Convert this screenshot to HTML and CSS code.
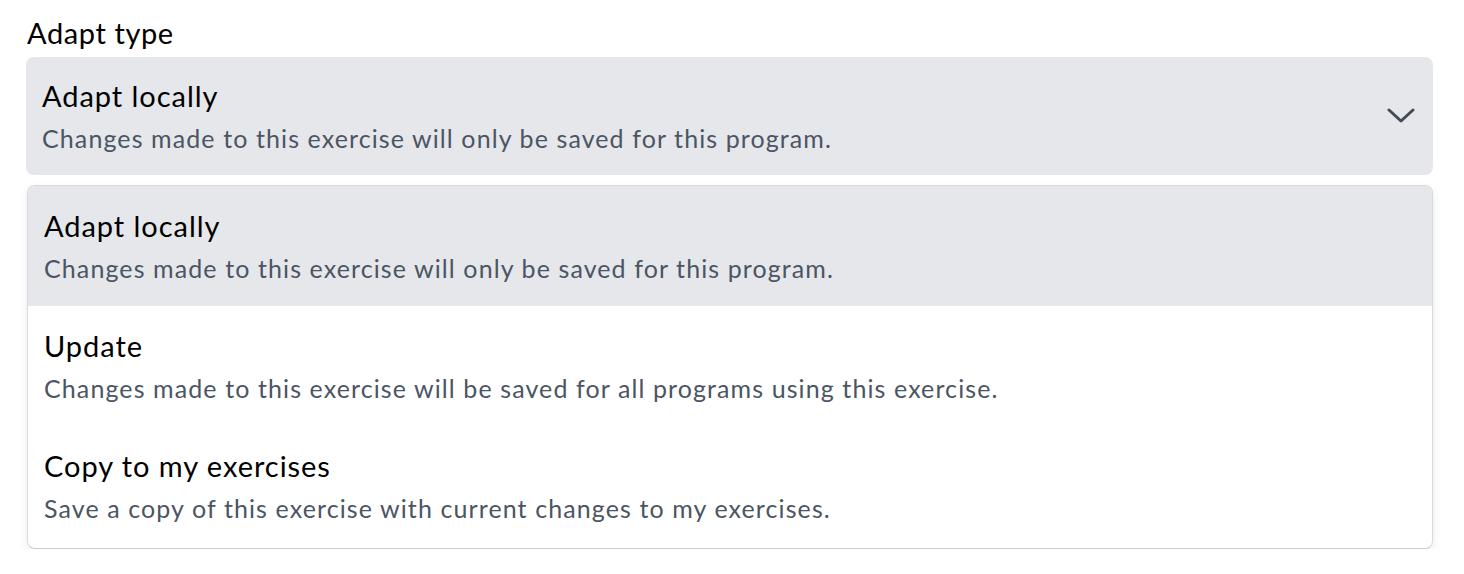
FILE: index.html
```html
<!DOCTYPE html>
<html>
<head>
<meta charset="utf-8">
<link rel="stylesheet" href="styles.css">
</head>
<body>
<div class="field">
  <div class="label">Adapt type</div>
  <div class="select">
    <div class="opt-text">
      <div class="title">Adapt locally</div>
      <div class="desc">Changes made to this exercise will only be saved for this program.</div>
    </div>
    <svg class="chev" width="28" height="16" viewBox="0 0 28 16"><path d="M2 2 L14 13 L26 2" fill="none" stroke="#424b5a" stroke-width="3" stroke-linecap="round" stroke-linejoin="round"/></svg>
  </div>
  <div class="menu">
    <div class="item active">
      <div class="title">Adapt locally</div>
      <div class="desc">Changes made to this exercise will only be saved for this program.</div>
    </div>
    <div class="item">
      <div class="title">Update</div>
      <div class="desc">Changes made to this exercise will be saved for all programs using this exercise.</div>
    </div>
    <div class="item">
      <div class="title">Copy to my exercises</div>
      <div class="desc">Save a copy of this exercise with current changes to my exercises.</div>
    </div>
  </div>
</div>
</body>
</html>
```
FILE: styles.css
```css
html, body { margin: 0; padding: 0; background: #fff; }
body { font-family: "Lato", "Noto Sans", sans-serif; color: #000; }
.field { padding: 14px 31px 0 26px; }
.label { font-size: 29px; line-height: 38px; padding-left: 1px; letter-spacing: 0.6px; }
.select {
  margin-top: 5px;
  height: 118px;
  background: #e5e7eb;
  border-radius: 8px;
  display: flex;
  align-items: center;
  padding: 0 16px 0 16px;
  box-sizing: border-box;
}
.opt-text { flex: 1; }
.chev { margin-right: 2px; }
.title { font-size: 29px; line-height: 38px; color: #000; letter-spacing: 0.95px; }
.desc { font-size: 25px; line-height: 34px; color: #4b5563; margin-top: 6px; letter-spacing: 1.1px; }
.menu {
  margin-top: 10px;
  margin-left: 1px;
  border: 1px solid #d7d9de;
  border-bottom-color: #c9ccd2;
  border-radius: 8px;
  overflow: hidden;
  box-shadow: 0 4px 10px rgba(0,0,0,0.08);
  background: #fff;
  padding-bottom: 2px;
}
.item {
  height: 120px;
  box-sizing: border-box;
  padding: 21px 16px 0 16px;
}
.item.active { background: #e5e7eb; }
```
